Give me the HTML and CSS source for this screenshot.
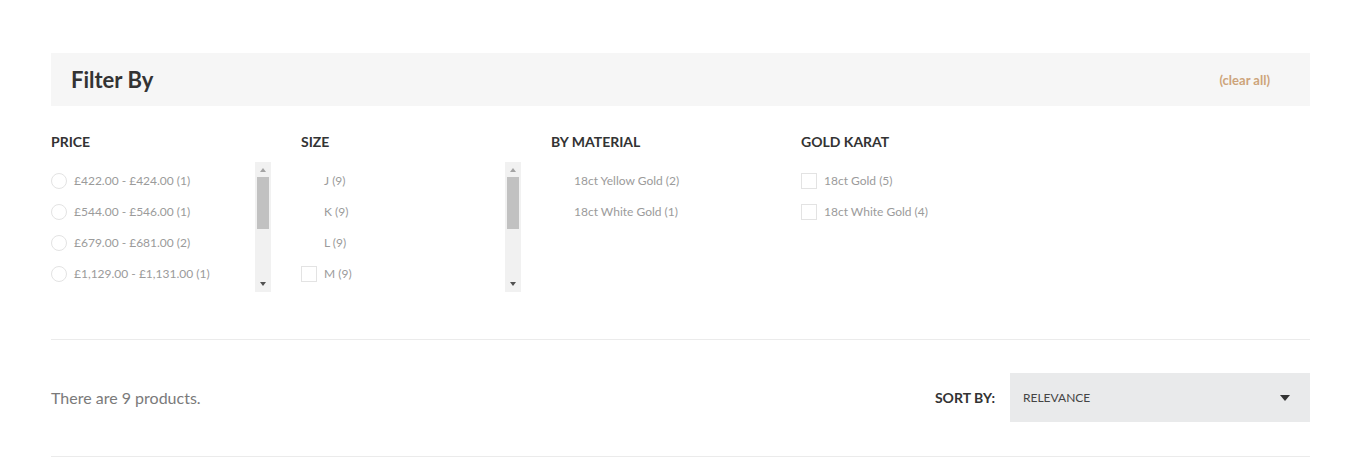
FILE: index.html
```html
<!DOCTYPE html>
<html>
<head>
<meta charset="utf-8">
<link rel="stylesheet" href="styles.css">
</head>
<body>
<div class="page">
  <div class="filter-head">
    <h2 class="filter-title">Filter By</h2>
    <a class="clear-all">(clear all)</a>
  </div>

  <div class="facets">
    <div class="facet">
      <div class="facet-title">PRICE</div>
      <div class="facet-box">
        <ul class="facet-list">
          <li class="opt"><span class="radio"></span><span class="lbl">£422.00 - £424.00 (1)</span></li>
          <li class="opt"><span class="radio"></span><span class="lbl">£544.00 - £546.00 (1)</span></li>
          <li class="opt"><span class="radio"></span><span class="lbl">£679.00 - £681.00 (2)</span></li>
          <li class="opt"><span class="radio"></span><span class="lbl">£1,129.00 - £1,131.00 (1)</span></li>
        </ul>
        <div class="scrollbar">
          <span class="arr arr-up"></span>
          <span class="thumb"></span>
          <span class="track-fill"></span>
          <span class="arr arr-down"></span>
        </div>
      </div>
    </div>

    <div class="facet">
      <div class="facet-title">SIZE</div>
      <div class="facet-box">
        <ul class="facet-list">
          <li class="opt"><span class="blank"></span><span class="lbl">J (9)</span></li>
          <li class="opt"><span class="blank"></span><span class="lbl">K (9)</span></li>
          <li class="opt"><span class="blank"></span><span class="lbl">L (9)</span></li>
          <li class="opt"><span class="check"></span><span class="lbl">M (9)</span></li>
        </ul>
        <div class="scrollbar">
          <span class="arr arr-up"></span>
          <span class="thumb"></span>
          <span class="track-fill"></span>
          <span class="arr arr-down"></span>
        </div>
      </div>
    </div>

    <div class="facet">
      <div class="facet-title">BY MATERIAL</div>
      <ul class="facet-list plain">
        <li class="opt"><span class="blank"></span><span class="lbl">18ct Yellow Gold (2)</span></li>
        <li class="opt"><span class="blank"></span><span class="lbl">18ct White Gold (1)</span></li>
      </ul>
    </div>

    <div class="facet">
      <div class="facet-title">GOLD KARAT</div>
      <ul class="facet-list plain">
        <li class="opt"><span class="check"></span><span class="lbl">18ct Gold (5)</span></li>
        <li class="opt"><span class="check"></span><span class="lbl">18ct White Gold (4)</span></li>
      </ul>
    </div>
  </div>

  <div class="sort-row">
    <p class="count">There are 9 products.</p>
    <div class="sort">
      <span class="sort-label">SORT BY:</span>
      <div class="select">
        <span>RELEVANCE</span>
        <svg class="caret" width="10" height="6" viewBox="0 0 10 6"><path d="M0 0H10L5 6Z" fill="#333"/></svg>
      </div>
    </div>
  </div>
</div>
</body>
</html>
```

FILE: styles.css
```css
* { box-sizing: border-box; }
html, body { margin: 0; padding: 0; background: #fff; }
body { font-family: Lato, "Open Sans", "Liberation Sans", sans-serif; color: #333; }

.page {
  width: 1259px;
  margin-left: 51px;
  padding-top: 53px;
}

.filter-head {
  height: 53px;
  background: #f6f6f6;
  display: flex;
  align-items: center;
  justify-content: space-between;
  padding: 0 40px 0 20px;
}
.filter-title {
  margin: 0;
  font-size: 22px;
  font-weight: 700;
  color: #333;
  line-height: 26px;
}
.clear-all {
  font-size: 13px;
  font-weight: 700;
  color: #cda47a;
  cursor: pointer;
}

.facets {
  display: flex;
  padding-top: 26px;
  height: 234px;
  border-bottom: 1px solid #ebebeb;
}
.facet { width: 250px; }
.facet-title {
  font-size: 14px;
  font-weight: 700;
  line-height: 20px;
  height: 20px;
  color: #333;
  margin-bottom: 10px;
}
.facet-box {
  display: flex;
  width: 220px;
  height: 130px;
}
.facet-list {
  list-style: none;
  margin: 0;
  padding: 3px 0 0;
  flex: 1;
}
.opt {
  height: 31px;
  display: flex;
  align-items: center;
  gap: 7px;
}
.lbl {
  font-size: 12px;
  color: #9b9b9b;
}
.radio {
  width: 16px;
  height: 16px;
  border: 1px solid #e3e3e3;
  border-radius: 50%;
  background: #fff;
}
.check {
  width: 16px;
  height: 16px;
  border: 1px solid #e3e3e3;
  background: #fff;
}
.blank { width: 16px; height: 16px; }

.scrollbar {
  width: 16px;
  height: 130px;
  background: #f1f1f1;
  display: flex;
  flex-direction: column;
  align-items: center;
}
.arr {
  width: 0; height: 0;
  border-left: 3.5px solid transparent;
  border-right: 3.5px solid transparent;
}
.arr-up {
  margin: 6px 0 5px;
  border-bottom: 4px solid #a3a3a3;
}
.arr-down {
  margin: 0 0 6px;
  border-top: 4px solid #505050;
}
.thumb {
  width: 12px;
  height: 52px;
  background: #c1c1c1;
}
.track-fill { flex: 1; }

.sort-row {
  display: flex;
  align-items: center;
  justify-content: space-between;
  padding: 33px 0 34px;
  border-bottom: 1px solid #ebebeb;
}
.count {
  margin: 0;
  font-size: 16px;
  color: #7a7a7a;
}
.sort { display: flex; align-items: center; gap: 15px; }
.sort-label {
  font-size: 14px;
  font-weight: 700;
  color: #333;
}
.select {
  width: 300px;
  height: 49px;
  background: #e9eaeb;
  display: flex;
  align-items: center;
  justify-content: space-between;
  padding: 0 20px 0 13px;
  font-size: 12px;
  color: #444;
}
.caret { display: block; }
```
